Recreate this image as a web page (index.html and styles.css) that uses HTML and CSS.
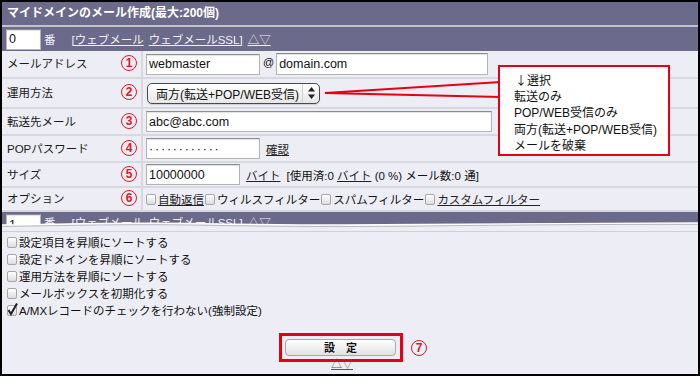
FILE: index.html
```html
<!DOCTYPE html>
<html lang="ja">
<head>
  <meta charset="UTF-8">
  <meta name="viewport" content="width=device-width, initial-scale=1.0">
  <title>マイドメインのメール作成</title>
  <link rel="stylesheet" href="styles.css">
</head>
<body>
  <div class="frame">
    <div class="title">マイドメインのメール作成(最大:200個)</div>
    <div class="bar">
      <input class="field no" type="text" value="0">
      <span class="ban">番</span>
      <a href="#">[ウェブメール</a>
      <a href="#">ウェブメールSSL]</a>
      <a href="#">△▽</a>
    </div>

    <div class="form">
      <div class="label"><span>メールアドレス</span><span class="num">1</span></div>
      <div class="value">
        <input class="field short" type="text" value="webmaster"><span class="at">@</span><input class="field domain" type="text" value="domain.com">
      </div>

      <div class="label"><span>運用方法</span><span class="num">2</span></div>
      <div class="value">
        <div class="select">
          <span class="current">両方(転送+POP/WEB受信)</span>
          <span class="updown">
            <svg width="7" height="12" viewBox="0 0 7 12"><path d="M3.5 0 L7 4.5 L0 4.5 Z M3.5 12 L7 7.5 L0 7.5 Z" fill="#222"/></svg>
          </span>
        </div>
      </div>

      <div class="label"><span>転送先メール</span><span class="num">3</span></div>
      <div class="value">
        <input class="field long" type="text" value="abc@abc.com">
      </div>

      <div class="label"><span>POPパスワード</span><span class="num">4</span></div>
      <div class="value">
        <input class="field short pass" type="text" value="············">
        <a href="#" class="link gap">確認</a>
      </div>

      <div class="label"><span>サイズ</span><span class="num">5</span></div>
      <div class="value">
        <input class="field size" type="text" value="10000000">
        <a href="#" class="link gap">バイト</a>
        <span class="usage">[使用済:0 <a href="#" class="link">バイト</a> (0 %) メール数:0 通]</span>
      </div>

      <div class="label"><span>オプション</span><span class="num">6</span></div>
      <div class="value options">
        <span class="cb"></span><a href="#" class="link">自動返信</a>
        <span class="cb"></span><span>ウィルスフィルター</span>
        <span class="cb"></span><span>スパムフィルター</span>
        <span class="cb"></span><a href="#" class="link">カスタムフィルター</a>
      </div>
    </div>

    <div class="cut">
      <div class="bar">
        <input class="field no" type="text" value="1">
        <span class="ban">番</span>
        <a href="#">[ウェブメール</a>
        <a href="#">ウェブメールSSL]</a>
        <a href="#">△▽</a>
      </div>
      <svg class="tear" width="696" height="9" viewBox="0 0 696 9">
        <path d="M0 3 C80 2 120 0.5 200 1.8 S330 3.6 420 2.6 S600 0.8 696 1 L696 9 L0 9 Z" fill="#ededf5"/>
        <path d="M0 3 C80 2 120 0.5 200 1.8 S330 3.6 420 2.6 S600 0.8 696 1" fill="none" stroke="#fff" stroke-width="1.6"/>
        <path d="M0 4.4 C80 3.4 120 1.9 200 3.2 S330 5 420 4 S600 2.2 696 2.4" fill="none" stroke="#a9a9b4" stroke-width="0.8"/>
      </svg>
    </div>

    <ul class="checks">
      <li><span class="cb"></span>設定項目を昇順にソートする</li>
      <li><span class="cb"></span>設定ドメインを昇順にソートする</li>
      <li><span class="cb"></span>運用方法を昇順にソートする</li>
      <li><span class="cb"></span>メールボックスを初期化する</li>
      <li><span class="cb on"><svg width="11" height="13" viewBox="0 0 11 13"><path d="M1.5 7 L4 11 L10 0.5" fill="none" stroke="#222" stroke-width="2"/></svg></span>A/MXレコードのチェックを行わない(強制設定)</li>
    </ul>

    <div class="submit">
      <span class="mark"><button class="set" type="button">設　定</button></span>
      <span class="num">7</span>
    </div>
    <div class="nav"><a href="#">△▽</a></div>

    <svg class="pointer" width="180" height="20" viewBox="0 0 180 20">
      <polyline points="178,2 2,13 178,17" fill="none" stroke="#e60012" stroke-width="2"/>
    </svg>
    <ul class="callout">
      <li class="first">↓選択</li>
      <li>転送のみ</li>
      <li>POP/WEB受信のみ</li>
      <li>両方(転送+POP/WEB受信)</li>
      <li>メールを破棄</li>
    </ul>
  </div>
</body>
</html>
```

FILE: styles.css
```css
body {
  margin: 0;
  font-family: "Liberation Sans", "Noto Sans CJK JP", sans-serif;
  font-size: 11.5px;
  color: #111;
  background: #fff;
}

.frame {
  position: relative;
  width: 700px;
  height: 376px;
  box-sizing: border-box;
  border: 2px solid #000;
  background: #ededf5;
  overflow: hidden;
}

.title {
  height: 23px;
  line-height: 23px;
  padding-left: 5px;
  background: #6b6a8a;
  color: #fff;
  font-size: 12px;
  font-weight: bold;
  border-bottom: 2px solid #c2c2ca;
}

.bar {
  display: flex;
  align-items: center;
  height: 24px;
  padding-left: 4px;
  background: #6b6a8a;
  color: #f0f0f5;
}

.bar a {
  color: #f0f0f5;
  margin-right: 5px;
}

.bar .ban {
  margin: 0 16px 0 3px;
}

.field {
  box-sizing: border-box;
  height: 21px;
  margin: 0;
  padding: 0 2px;
  border: 1px solid #b4b4b4;
  border-top-color: #8c8c8c;
  box-shadow: inset 0 1px 1px rgba(0, 0, 0, 0.12);
  background: #fff;
  font-family: "Liberation Sans", sans-serif;
  font-size: 12.5px;
  color: #111;
}

.field.no { width: 35px; }
.field.short { width: 114px; }
.field.domain { width: 212px; height: 22px; }
.field.long { width: 346px; }
.field.size { width: 94px; }
.field.pass { letter-spacing: 1.8px; }

.form {
  display: grid;
  grid-template-columns: 141px 1fr;
  grid-template-rows: 28px 30px 27px 27px 25px 24px;
}

.label,
.value {
  box-sizing: border-box;
  display: flex;
  align-items: center;
  border-bottom: 2px solid #d8d8e0;
}

.label {
  justify-content: space-between;
  padding: 0 4px 2px 5px;
  border-right: 2px solid #d8d8e0;
  color: #1a1a1a;
}

.value {
  padding-left: 3px;
}

.num {
  box-sizing: border-box;
  width: 16px;
  height: 16px;
  border: 1px solid #e8141e;
  border-radius: 50%;
  color: #e8141e;
  font-family: "Liberation Sans", sans-serif;
  font-size: 12px;
  font-weight: bold;
  line-height: 14px;
  text-align: center;
}

.at {
  align-self: flex-start;
  margin: 5px 2px 0 3px;
  font-size: 11px;
}

.select {
  box-sizing: border-box;
  display: flex;
  align-items: center;
  width: 173px;
  height: 21px;
  margin-left: 1px;
  border: 1px solid #4a4a4a;
  border-radius: 5px;
  background: linear-gradient(#ffffff, #e6e6e6);
  box-shadow: 0 1px 1px rgba(0, 0, 0, 0.15);
}

.select .current {
  flex: 1;
  padding-left: 8px;
  font-size: 12px;
}

.select .updown {
  display: flex;
  align-items: center;
  justify-content: center;
  width: 16px;
  height: 100%;
  border-left: 1px solid #d0d0d0;
}

.link {
  color: #222;
  text-decoration: underline;
}

.gap {
  margin: 0 6px;
}

.options {
  gap: 1px;
}

.cb {
  box-sizing: border-box;
  display: inline-block;
  position: relative;
  width: 10px;
  height: 11px;
  margin-right: 1px;
  border: 1px solid #a6a6a6;
  border-radius: 2px;
  background: linear-gradient(#ffffff, #dcdcdc);
  vertical-align: -1px;
}

.cb svg {
  position: absolute;
  left: -1px;
  top: -3px;
}

.cut {
  position: relative;
  height: 19px;
  border-bottom: 1px solid #d0d0d8;
  overflow: hidden;
}

.cut .bar {
  align-items: flex-start;
  padding-top: 2px;
}

.tear {
  position: absolute;
  left: 0;
  bottom: 0;
}

.checks {
  margin: 0;
  padding: 3px 0 0 5px;
  list-style: none;
}

.checks li {
  height: 17px;
  line-height: 17px;
}

.checks .cb {
  margin-right: 2px;
}

.submit {
  display: flex;
  align-items: center;
  gap: 8px;
  margin-top: 13px;
  padding-left: 277px;
}

.mark {
  display: inline-flex;
  padding: 3px 4px 3px 3px;
  border: 3px solid #e60012;
}

.set {
  width: 111px;
  height: 17px;
  padding: 0;
  border: 1px solid #a8a8a8;
  border-radius: 4px;
  background: linear-gradient(#fefefe, #e2e2e2);
  font-family: "Noto Sans CJK JP", sans-serif;
  font-size: 11px;
  font-weight: bold;
  line-height: 15px;
  color: #111;
}

.nav {
  margin-top: -5px;
  padding-left: 329px;
  font-family: "Noto Sans CJK JP", sans-serif;
  font-size: 11px;
  line-height: 12px;
}

.nav a {
  color: #555;
}

.pointer {
  position: absolute;
  left: 321px;
  top: 78px;
}

.callout {
  position: absolute;
  left: 496px;
  top: 63px;
  width: 172px;
  height: 91px;
  box-sizing: border-box;
  margin: 0;
  padding: 5px 0 0 14px;
  border: 2px solid #e60012;
  background: #fff;
  list-style: none;
  font-size: 12px;
  line-height: 16.5px;
}

.callout .first {
  padding-left: 1px;
  font-family: "Noto Sans CJK JP", sans-serif;
}
```
